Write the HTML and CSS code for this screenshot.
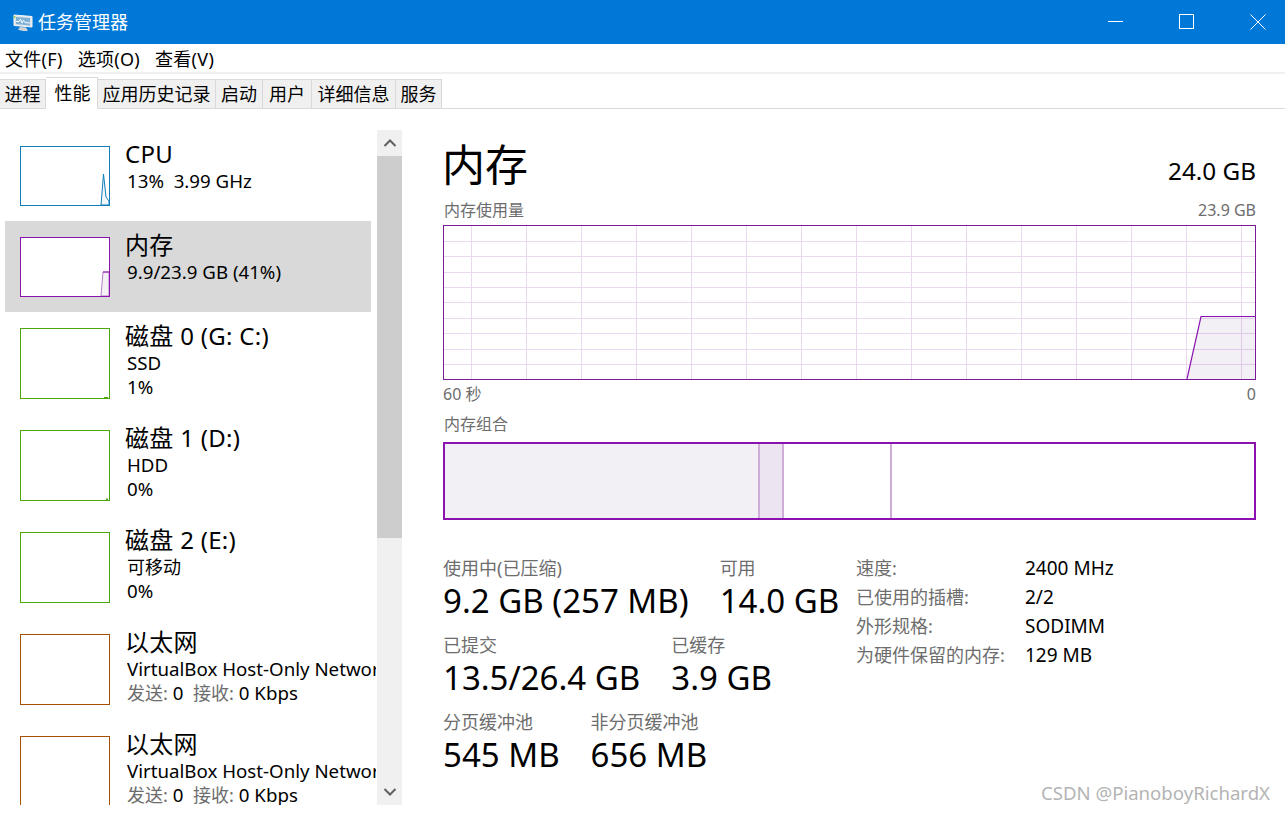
FILE: index.html
```html
<!DOCTYPE html>
<html lang="zh-CN">
<head>
  <meta charset="UTF-8" />
  <title>任务管理器</title>
  <link rel="stylesheet" href="styles.css">
</head>
<body>

<div class="titlebar">
  <svg class="app-icon" width="22" height="22" viewBox="0 0 22 22">
    <path d="M3 4L21 5.500V16L3 14.500Z" fill="#dfe4e8" stroke="#f5f6f7"/>
    <path d="M5 6L19 7V14.500L5 13Z" fill="#7fb0d6"/>
    <path d="M5 10.500L8 10.500L9.500 8L11 12L12.500 9.500L14 11.500L19 12" fill="none" stroke="#fff"/>
    <path d="M9 16L15 16.500L17 19.500C14 20.500 10 20 7 18.500Z" fill="#cfd4d8"/>
    <circle cx="3.500" cy="6" r="1" fill="#8cc63f"/>
  </svg>
  <span class="app-title">任务管理器</span>
  <div class="win-buttons">
    <svg width="16" height="16" viewBox="0 0 16 16"><path d="M0 7.500h15" stroke="#fff" fill="none"/></svg>
    <svg width="16" height="16" viewBox="0 0 16 16"><rect x="0.500" y="0.500" width="14" height="14" stroke="#fff" fill="none"/></svg>
    <svg width="16" height="16" viewBox="0 0 16 16"><path d="M0.500 0.500l15 15M15.500 0.500l-15 15" stroke="#fff" fill="none"/></svg>
  </div>
</div>

<div class="menubar">
  <span>文件(F)</span>
  <span>选项(O)</span>
  <span>查看(V)</span>
</div>

<div class="tabs">
  <div class="tab">进程</div>
  <div class="tab active">性能</div>
  <div class="tab">应用历史记录</div>
  <div class="tab">启动</div>
  <div class="tab">用户</div>
  <div class="tab">详细信息</div>
  <div class="tab">服务</div>
</div>

<div class="content">
  <div class="sidebar">
    <div class="device-list">
      <div class="device short">
        <div class="thumb cpu">
          <svg viewBox="0 0 88 58"><path d="M80 58L82.500 27L85 50L88 54V58Z" fill="#f1f6fb" stroke="#117dbb"/></svg>
        </div>
        <div class="device-text">
          <div class="device-name">CPU</div>
          <div class="device-sub">13%&nbsp; 3.99 GHz</div>
        </div>
      </div>
      <div class="device short selected">
        <div class="thumb mem">
          <svg viewBox="0 0 88 58"><path d="M80 58L82 34H88V58Z" fill="#f4f2f4" stroke="#b57cc9"/><path d="M82 34H88" stroke="#8b12ae"/></svg>
        </div>
        <div class="device-text">
          <div class="device-name">内存</div>
          <div class="device-sub">9.9/23.9 GB (41%)</div>
        </div>
      </div>
      <div class="device">
        <div class="thumb disk">
          <svg viewBox="0 0 88 69"><path d="M83 69V68H87V69Z" fill="#4da60c"/></svg>
        </div>
        <div class="device-text">
          <div class="device-name">磁盘 0 (G: C:)</div>
          <div class="device-sub">SSD</div>
          <div class="device-sub">1%</div>
        </div>
      </div>
      <div class="device">
        <div class="thumb disk">
          <svg viewBox="0 0 88 69"><path d="M85 69V67.500H87V69Z" fill="#4da60c"/></svg>
        </div>
        <div class="device-text">
          <div class="device-name">磁盘 1 (D:)</div>
          <div class="device-sub">HDD</div>
          <div class="device-sub">0%</div>
        </div>
      </div>
      <div class="device">
        <div class="thumb disk"></div>
        <div class="device-text">
          <div class="device-name">磁盘 2 (E:)</div>
          <div class="device-sub cn">可移动</div>
          <div class="device-sub">0%</div>
        </div>
      </div>
      <div class="device">
        <div class="thumb net"></div>
        <div class="device-text">
          <div class="device-name">以太网</div>
          <div class="device-sub clip">VirtualBox Host-Only Network</div>
          <div class="device-sub"><span class="muted">发送:</span> 0&nbsp; <span class="muted">接收:</span> 0 Kbps</div>
        </div>
      </div>
      <div class="device">
        <div class="thumb net"></div>
        <div class="device-text">
          <div class="device-name">以太网</div>
          <div class="device-sub clip">VirtualBox Host-Only Network</div>
          <div class="device-sub"><span class="muted">发送:</span> 0&nbsp; <span class="muted">接收:</span> 0 Kbps</div>
        </div>
      </div>
    </div>
    <div class="scrollbar">
      <div class="scroll-btn">
        <svg width="14" height="10" viewBox="0 0 14 10"><path d="M1.500 8L7 2.500L12.500 8" fill="none" stroke="#606060" stroke-width="2"/></svg>
      </div>
      <div class="scroll-track"><div class="scroll-thumb"></div></div>
      <div class="scroll-btn">
        <svg width="14" height="10" viewBox="0 0 14 10"><path d="M1.500 2L7 7.500L12.500 2" fill="none" stroke="#606060" stroke-width="2"/></svg>
      </div>
    </div>
  </div>

  <div class="main">
    <div class="main-head">
      <h1>内存</h1>
      <div class="total">24.0 GB</div>
    </div>
    <div class="chart-label"><span>内存使用量</span><span>23.9 GB</span></div>
    <div class="chart">
      <svg viewBox="0 0 811 153">
        <path class="grid" d="M27.500 0V153M82.500 0V153M137.500 0V153M192.500 0V153M247.500 0V153M302.500 0V153M357.500 0V153M412.500 0V153M467.500 0V153M522.500 0V153M577.500 0V153M632.500 0V153M687.500 0V153M742.500 0V153M797.500 0V153"/>
        <path class="grid" d="M0 15.500H811M0 30.500H811M0 46.500H811M0 61.500H811M0 76.500H811M0 92.500H811M0 107.500H811M0 123.500H811M0 138.500H811"/>
        <path d="M743 153L757 90.500H811V153Z" fill="#5a2d6e" fill-opacity="0.07"/>
        <path d="M743 153L757 90.500H811" fill="none" stroke="#8b12ae" stroke-width="1.200"/>
      </svg>
    </div>
    <div class="chart-axis"><span>60 秒</span><span>0</span></div>
    <div class="comp-label">内存组合</div>
    <div class="composition">
      <div class="seg used"></div>
      <div class="seg modified"></div>
      <div class="seg standby"></div>
      <div class="seg free"></div>
    </div>

    <div class="stats">
      <div class="stats-left">
        <div class="stat-row">
          <div class="stat"><div class="stat-label">使用中(已压缩)</div><div class="stat-value">9.2 GB (257 MB)</div></div>
          <div class="stat"><div class="stat-label">可用</div><div class="stat-value">14.0 GB</div></div>
        </div>
        <div class="stat-row">
          <div class="stat"><div class="stat-label">已提交</div><div class="stat-value">13.5/26.4 GB</div></div>
          <div class="stat"><div class="stat-label">已缓存</div><div class="stat-value">3.9 GB</div></div>
        </div>
        <div class="stat-row">
          <div class="stat"><div class="stat-label">分页缓冲池</div><div class="stat-value">545 MB</div></div>
          <div class="stat"><div class="stat-label">非分页缓冲池</div><div class="stat-value">656 MB</div></div>
        </div>
      </div>
      <div class="stats-right">
        <span class="key">速度:</span><span class="val">2400 MHz</span>
        <span class="key">已使用的插槽:</span><span class="val">2/2</span>
        <span class="key">外形规格:</span><span class="val">SODIMM</span>
        <span class="key">为硬件保留的内存:</span><span class="val">129 MB</span>
      </div>
    </div>
  </div>
</div>

<div class="watermark">CSDN @PianoboyRichardX</div>

</body>
</html>
```

FILE: styles.css
```css
* {
  box-sizing: border-box;
}

body {
  font-family: "Noto Sans", "Noto Sans CJK SC", sans-serif;
  font-size: 18px;
  color: #000;
  background-color: #fff;
  margin: 0;
  height: 813px;
  overflow: hidden;
  position: relative;
}

.titlebar {
  height: 44px;
  background-color: #0078d7;
  color: #fff;
  display: flex;
  align-items: center;
  padding-left: 11px;
}

.app-icon {
  margin-right: 5px;
}

.app-title {
  line-height: 44px;
}

.win-buttons {
  margin-left: auto;
  display: flex;
  gap: 55px;
  padding-right: 19px;
}

.win-buttons svg {
  display: block;
}

.menubar {
  height: 30px;
  display: flex;
  gap: 15px;
  padding-left: 5px;
  line-height: 30px;
  letter-spacing: 0.3px;
  border-bottom: 2px solid #f0f0f0;
}

.tabs {
  height: 35px;
  display: grid;
  grid-template-columns: 46px 52px 118px 47px 49px 84px 46px;
  align-items: end;
  border-bottom: 1px solid #d9d9d9;
}

.tab {
  height: 30px;
  line-height: 28px;
  text-align: center;
  background-color: #f0f0f0;
  border: 1px solid #d9d9d9;
  border-left: 0;
  margin-bottom: -1px;
  white-space: nowrap;
}

.tab.active {
  height: 32px;
  background-color: #fff;
  border-bottom-color: #fff;
  line-height: 30px;
  padding-left: 2px;
}

.content {
  display: flex;
  padding-top: 21px;
}

.sidebar {
  width: 403px;
  height: 675px;
  display: flex;
  flex-shrink: 0;
}

.device-list {
  width: 377px;
  height: 675px;
  overflow: hidden;
  padding-left: 5px;
}

.device {
  width: 366px;
  height: 102px;
  padding: 16px 0 0 15px;
  display: flex;
}

.device.short {
  height: 91px;
}

.device.selected {
  background-color: #d9d9d9;
}

.thumb {
  width: 90px;
  height: 71px;
  border: 1px solid;
  flex-shrink: 0;
  background-color: #fff;
}

.short .thumb {
  height: 60px;
}

.thumb svg {
  display: block;
  width: 100%;
  height: 100%;
}

.thumb.cpu { border-color: #117dbb; }
.thumb.mem { border-color: #8b12ae; }
.thumb.disk { border-color: #4da60c; }
.thumb.net { border-color: #a74f01; }

.device-text {
  margin-left: 15px;
  margin-top: -7px;
  width: 256px;
}

.device-name {
  font-size: 24px;
  line-height: 30px;
  letter-spacing: 0.3px;
  white-space: nowrap;
}

.device-sub {
  font-size: 18.7px;
  line-height: 24px;
  margin-left: 2px;
  white-space: nowrap;
}

.device-sub.cn {
  font-size: 18px;
}

.clip {
  width: 249px;
  overflow: hidden;
}

.muted {
  color: #6d6d6d;
  font-size: 18px;
}

.scrollbar {
  width: 25px;
  background-color: #f0f0f0;
  display: flex;
  flex-direction: column;
}

.scroll-btn {
  height: 26px;
  display: flex;
  align-items: center;
  justify-content: center;
}

.scroll-track {
  flex: 1;
}

.scroll-thumb {
  height: 382px;
  background-color: #cdcdcd;
}

.main {
  margin-left: 40px;
  padding-top: 4px;
  width: 813px;
}

.main-head {
  display: flex;
  justify-content: space-between;
  align-items: flex-end;
  height: 61px;
}

.main-head h1 {
  font-size: 43px;
  font-weight: 400;
  line-height: 61px;
  margin: 0 0 0 -1px;
}

.total {
  font-size: 24.3px;
  line-height: 34px;
  padding-bottom: 7px;
}

.chart-label,
.chart-axis {
  display: flex;
  justify-content: space-between;
  color: #6d6d6d;
  font-size: 16px;
  line-height: 24px;
}

.chart-label {
  margin-top: 3px;
  height: 27px;
  padding-left: 1px;
}

.chart {
  height: 155px;
  border: 1px solid #7a1a96;
  background-color: #fff;
}

.chart svg {
  display: block;
  width: 100%;
  height: 100%;
}

.grid {
  fill: none;
  stroke: #ebd9f1;
  stroke-width: 1;
}

.chart-axis {
  margin-top: 2px;
  height: 30px;
}

.comp-label {
  color: #6d6d6d;
  font-size: 16px;
  line-height: 24px;
  height: 30px;
  padding-left: 1px;
}

.composition {
  height: 78px;
  border: 2px solid #8b12ae;
  display: flex;
}

.seg {
  border-right: 2px solid #cfadd9;
}

.seg.used {
  width: 315px;
  background-color: #f3f0f5;
}

.seg.modified {
  width: 24px;
  background-color: #ede4f1;
}

.seg.standby {
  width: 108px;
}

.seg.free {
  flex: 1;
  border-right: 0;
}

.stats {
  display: flex;
  margin-top: 35px;
}

.stats-left {
  width: 413px;
  flex-shrink: 0;
}

.stat-row {
  display: flex;
  gap: 31px;
  height: 77px;
}

.stat-label {
  color: #6d6d6d;
  line-height: 26px;
}

.stat-value {
  font-size: 33px;
  line-height: 40px;
  white-space: nowrap;
}

.stats-right {
  display: grid;
  grid-template-columns: 169px auto;
  grid-auto-rows: 29px;
  line-height: 26px;
}

.key {
  color: #6d6d6d;
}

.val {
  font-size: 19px;
}

.watermark {
  position: absolute;
  right: 15px;
  top: 781px;
  font-size: 18.6px;
  line-height: 24px;
  color: #b4b4b4;
}
```
